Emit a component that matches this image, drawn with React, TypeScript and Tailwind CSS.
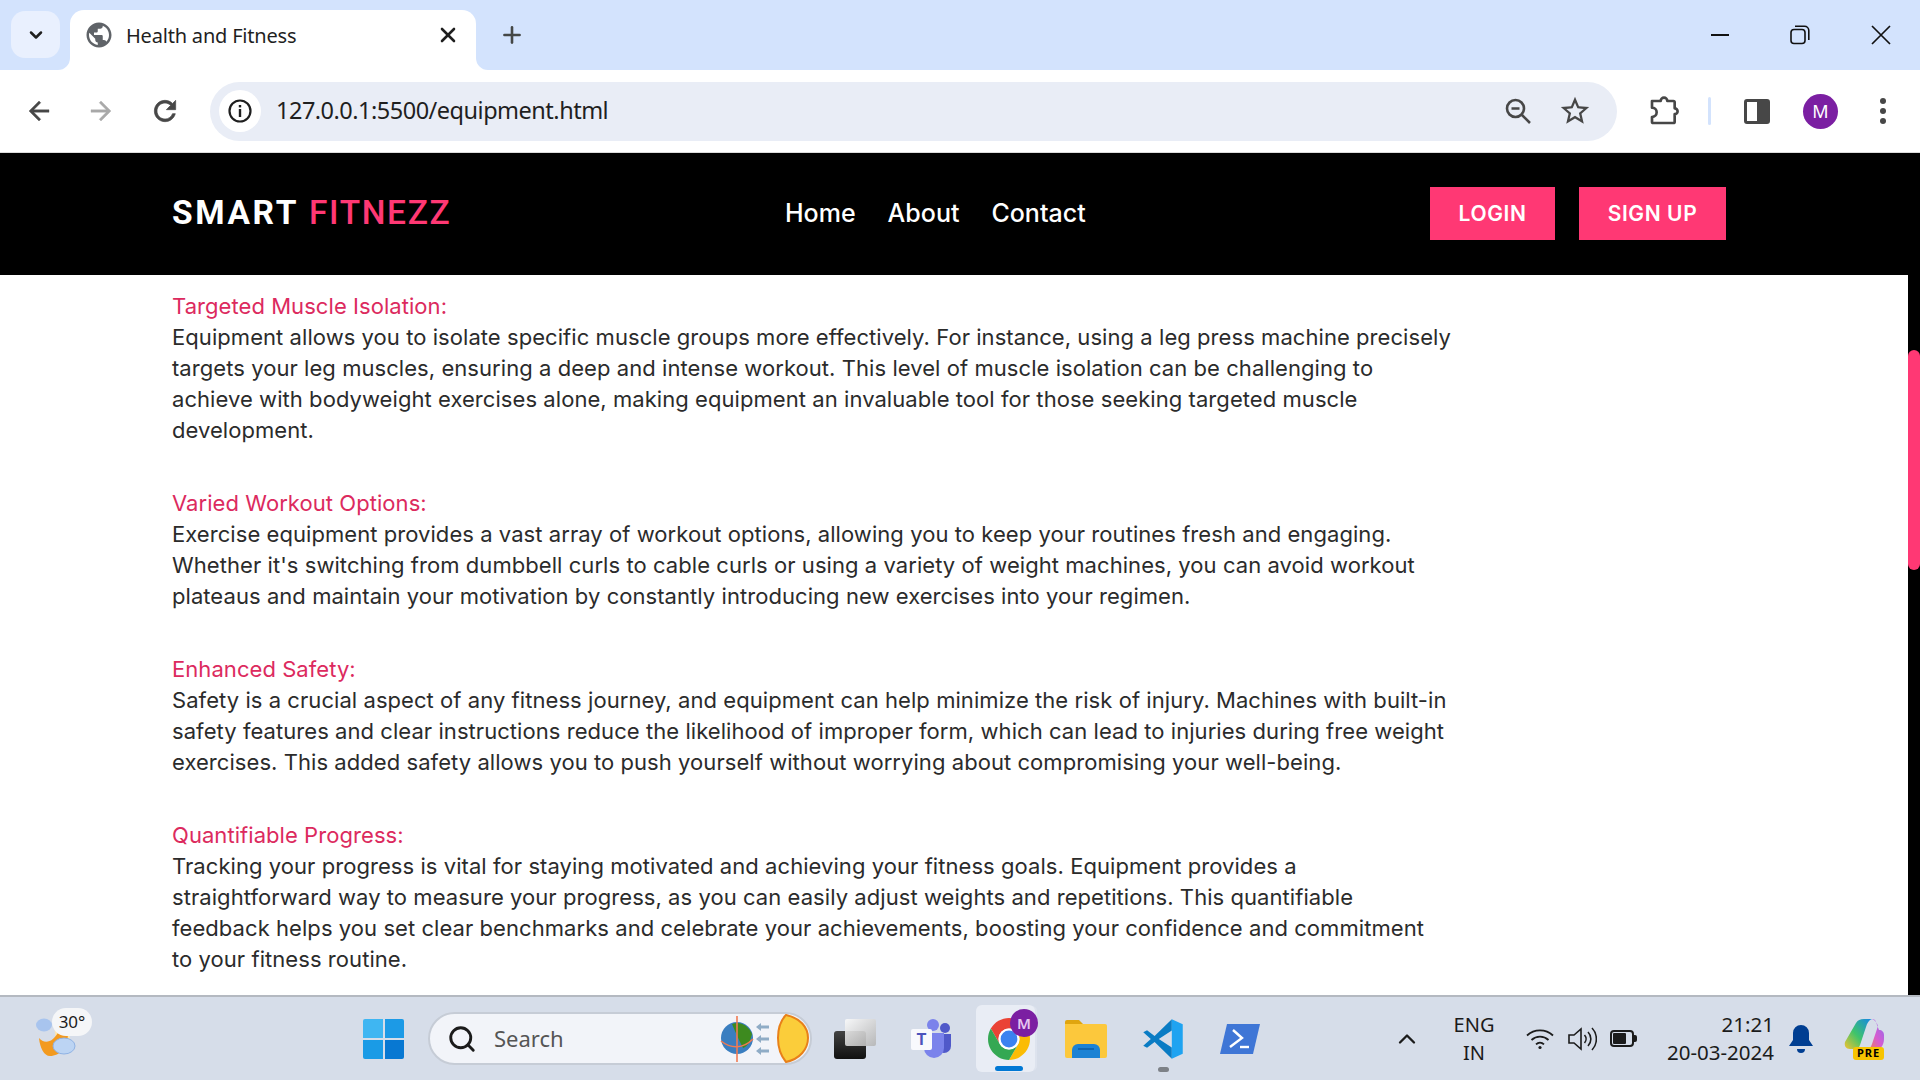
import React from "react";
import { X, Plus, ChevronDown, ChevronUp, Search } from "lucide-react";

const ui = "font-['Noto_Sans','Open_Sans',sans-serif]";

const P = ({ d, size, color, className = "", stroke = 0 }: { d: string; size: number; color: string; className?: string; stroke?: number }) => (
  <svg width={size} height={size} viewBox="0 0 24 24" fill={color} stroke={color} strokeWidth={stroke} className={"shrink-0 " + className}>
    <path d={d} />
  </svg>
);

const sections = [
  {
    h: "Targeted Muscle Isolation:",
    l: [
      "Equipment allows you to isolate specific muscle groups more effectively. For instance, using a leg press machine precisely",
      "targets your leg muscles, ensuring a deep and intense workout. This level of muscle isolation can be challenging to",
      "achieve with bodyweight exercises alone, making equipment an invaluable tool for those seeking targeted muscle",
      "development.",
    ],
  },
  {
    h: "Varied Workout Options:",
    l: [
      "Exercise equipment provides a vast array of workout options, allowing you to keep your routines fresh and engaging.",
      "Whether it's switching from dumbbell curls to cable curls or using a variety of weight machines, you can avoid workout",
      "plateaus and maintain your motivation by constantly introducing new exercises into your regimen.",
    ],
  },
  {
    h: "Enhanced Safety:",
    l: [
      "Safety is a crucial aspect of any fitness journey, and equipment can help minimize the risk of injury. Machines with built-in",
      "safety features and clear instructions reduce the likelihood of improper form, which can lead to injuries during free weight",
      "exercises. This added safety allows you to push yourself without worrying about compromising your well-being.",
    ],
  },
  {
    h: "Quantifiable Progress:",
    l: [
      "Tracking your progress is vital for staying motivated and achieving your fitness goals. Equipment provides a",
      "straightforward way to measure your progress, as you can easily adjust weights and repetitions. This quantifiable",
      "feedback helps you set clear benchmarks and celebrate your achievements, boosting your confidence and commitment",
      "to your fitness routine.",
    ],
  },
];

function TabStrip() {
  return (
    <div className="flex h-[70px] shrink-0 bg-[#d3e3fd]">
      <div className="ml-[11px] mt-[11px] flex h-[47px] w-[49px] items-center justify-center rounded-[14px] bg-[#e9f0fe]">
        <ChevronDown size={20} strokeWidth={3} color="#1f1f1f" />
      </div>
      <div className="relative ml-[10px] mt-[10px] flex h-[60px] w-[406px] items-center rounded-t-[14px] bg-white pb-[10px]">
        <svg width="12" height="12" viewBox="0 0 12 12" className="absolute bottom-0 left-[-12px]"><path d="M0 12A12 12 0 0 0 12 0V12Z" fill="#fff" /></svg>
        <svg width="12" height="12" viewBox="0 0 12 12" className="absolute bottom-0 right-[-12px]"><path d="M12 12A12 12 0 0 1 0 0V12Z" fill="#fff" /></svg>
        <P className="ml-[14px]" size={30} color="#5f6368" d="M12 2C6.48 2 2 6.48 2 12s4.48 10 10 10 10-4.48 10-10S17.52 2 12 2zm-1 17.93c-3.95-.49-7-3.85-7-7.93 0-.62.08-1.21.21-1.79L9 15v1c0 1.1.9 2 2 2v1.93zm6.9-2.54c-.26-.81-1-1.39-1.9-1.39h-1v-3c0-.55-.45-1-1-1H8v-2h2c.55 0 1-.45 1-1V7h2c1.1 0 2-.9 2-2v-.41c2.93 1.19 5 4.06 5 7.41 0 2.08-.8 3.97-2.1 5.39z" />
        <span className={ui + " ml-[12px] translate-y-[1px] text-[20px] tracking-[-0.2px] text-[#1f1f1f]"}>Health and Fitness</span>
        <X className="ml-auto mr-[16px]" size={24} strokeWidth={2.6} color="#1f1f1f" />
      </div>
      <div className="ml-[23px] flex items-center">
        <Plus size={26} strokeWidth={2.4} color="#444746" />
      </div>
      <div className="ml-auto flex items-center">
        <div className="h-[2px] w-[18px] bg-[#111]" />
        <svg className="ml-[61px]" width="20" height="20" viewBox="0 0 20 20" fill="none" stroke="#111" strokeWidth="1.6">
          <rect x="1" y="4.5" width="14" height="14" rx="3" />
          <path d="M5 1.2h9.5a4.3 4.3 0 0 1 4.3 4.3V15" />
        </svg>
        <svg className="ml-[61px] mr-[29px]" width="20" height="20" viewBox="0 0 20 20" stroke="#111" strokeWidth="1.7">
          <path d="M1 1l18 18M19 1L1 19" />
        </svg>
      </div>
    </div>
  );
}

function Toolbar() {
  return (
    <div className="flex h-[82px] shrink-0 items-center rounded-t-[12px] bg-white">
      <P className="ml-[24px]" size={30} stroke={0.3} color="#474747" d="M20 11H7.83l5.59-5.59L12 4l-8 8 8 8 1.41-1.41L7.83 13H20v-2z" />
      <P className="ml-[32px]" size={30} stroke={0.3} color="#a9a9a9" d="M4 11h12.17l-5.59-5.59L12 4l8 8-8 8-1.41-1.41L16.17 13H4v-2z" />
      <P className="ml-[33px]" size={32} stroke={0.5} color="#474747" d="M17.65 6.35C16.2 4.9 14.21 4 12 4c-4.42 0-7.99 3.58-7.99 8s3.57 8 7.99 8c3.73 0 6.84-2.55 7.73-6h-2.08c-.82 2.33-3.04 4-5.65 4-3.31 0-6-2.69-6-6s2.69-6 6-6c1.66 0 3.14.69 4.22 1.78L13 11h7V4l-2.35 2.35z" />
      <div className="ml-[29px] flex h-[59px] w-[1407px] items-center rounded-full bg-[#e9edf6]">
        <div className="ml-[9px] flex h-[42px] w-[42px] items-center justify-center rounded-full bg-white">
          <svg width="26" height="26" viewBox="0 0 26 26" fill="none">
            <circle cx="13" cy="13" r="10.5" stroke="#1f1f1f" strokeWidth="2.2" />
            <rect x="11.8" y="11" width="2.4" height="8" fill="#1f1f1f" />
            <rect x="11.8" y="7" width="2.4" height="2.4" fill="#1f1f1f" />
          </svg>
        </div>
        <span className={ui + " ml-[15px] text-[23.5px] tracking-[-0.5px] text-[#1f1f1f]"}>127.0.0.1:5500/equipment.html</span>
        <svg className="ml-auto" width="26" height="26" viewBox="0 0 26 26" fill="none" stroke="#474747" strokeWidth="2.6">
          <circle cx="10.5" cy="10.5" r="8.5" />
          <path d="M6.5 10.5h8M17 17l8 8" />
        </svg>
        <P className="ml-[27px] mr-[25px]" size={34} color="#474747" d="M22 9.24l-7.19-.62L12 2 9.19 8.63 2 9.24l5.46 4.73L5.82 21 12 17.27 18.18 21l-1.63-7.03L22 9.24zM12 15.4l-3.76 2.27 1-4.28-3.32-2.88 4.38-.38L12 6.1l1.71 4.04 4.38.38-3.32 2.88 1 4.28L12 15.4z" />
      </div>
      <svg className="ml-[31px]" width="32" height="32" viewBox="0 0 24 24" fill="none" stroke="#474747" strokeWidth="2" strokeLinejoin="round">
        <path d="M3 4.5H9.5a2.5 2.5 0 0 1 5 0H19a1 1 0 0 1 1 1V10a2.2 2.2 0 0 1 0 4.4V20a1 1 0 0 1-1 1H4a1 1 0 0 1-1-1V16.5a3.5 3.5 0 0 0 0-7Z" />
      </svg>
      <div className="ml-[28px] h-[28px] w-[3px] rounded-full bg-[#d3e3fd]" />
      <div className="ml-[33px] flex h-[25px] w-[26px] rounded-[3px] border-[3px] border-[#474747]">
        <div className="ml-auto h-full w-[10px] bg-[#474747]" />
      </div>
      <div className={ui + " ml-[33px] flex h-[35px] w-[35px] items-center justify-center rounded-full bg-[#7b1fa2] text-[18px] text-white"}>M</div>
      <div className="ml-[42px] flex flex-col gap-[4px]">
        <div className="h-[6px] w-[6px] rounded-full bg-[#474747]" />
        <div className="h-[6px] w-[6px] rounded-full bg-[#474747]" />
        <div className="h-[6px] w-[6px] rounded-full bg-[#474747]" />
      </div>
    </div>
  );
}

function Nav() {
  const f = "font-['Inter',sans-serif]";
  return (
    <div className="flex h-[123px] shrink-0 items-center border-t border-[#dcdcdc] bg-black pb-[1px] pl-[172px]">
      <div className="w-[613px] whitespace-nowrap font-['Roboto',sans-serif] text-[33.5px] font-bold tracking-[2.6px] text-white">
        SMART <span className="font-medium tracking-[1.6px] text-[#ff3874]">FITNEZZ</span>
      </div>
      <div className={f + " flex gap-[32px] text-[25px] font-medium tracking-[0px] text-white"}>
        <span>Home</span>
        <span>About</span>
        <span>Contact</span>
      </div>
      <div className={f + " ml-auto mr-[194px] flex gap-[24px] text-[21px] font-semibold tracking-[0.6px] text-white"}>
        <div className="flex h-[53px] w-[125px] items-center justify-center bg-[#ff3874]">LOGIN</div>
        <div className="flex h-[53px] w-[147px] items-center justify-center bg-[#ff3874]">SIGN UP</div>
      </div>
    </div>
  );
}

function Content() {
  return (
    <div className="flex min-h-0 flex-1 bg-white">
      <div className="min-h-0 flex-1 overflow-hidden pl-[172px] pt-[16px] font-['Inter',sans-serif] text-[22px] leading-[31px] tracking-[0.06px] text-[#2b2b2b]">
        {sections.map((s) => (
          <div key={s.h} className="mb-[42px] whitespace-nowrap">
            <div className="text-[#dc2a5e]">{s.h}</div>
            {s.l.map((t) => (
              <div key={t}>{t}</div>
            ))}
          </div>
        ))}
      </div>
      <div className="w-[12px] shrink-0 bg-black pt-[75px]">
        <div className="h-[220px] rounded-full bg-[#ff3874]" />
      </div>
    </div>
  );
}

function Taskbar() {
  const t = ui + " text-[#1b1b1b]";
  return (
    <div className="flex h-[85px] shrink-0 items-center border-t-2 border-[#b4b9c1] bg-[#d6dde9]">
      {/* weather */}
      <div className="relative ml-[36px] h-[52px] w-[56px]">
        <svg width="42" height="40" viewBox="0 0 42 40" className="absolute left-0 top-[4px]">
          <ellipse cx="8" cy="8" rx="8" ry="6.5" fill="#a8c4ee" />
          <path d="M18 8h16v16H20z" fill="#ffe6ae" />
          <path d="M3 21C8 27 17 27 24 12L32 16C32 30 24 39 14 39C8 39 4 31 3 21Z" fill="#f39a1f" />
          <ellipse cx="28" cy="29" rx="11" ry="8" fill="#bcd4f3" stroke="#8fb2e4" strokeWidth="1" />
        </svg>
        <div className={t + " absolute left-[16px] top-[-5px] flex h-[28px] w-[40px] items-center justify-center rounded-full bg-[#f5f6f8] text-[17px]"}>30°</div>
      </div>
      {/* windows */}
      <div className="ml-[271px] grid h-[40px] w-[41px] grid-cols-2 gap-[2px]">
        <div className="rounded-tl-[2px] bg-[#3fb6f2]" />
        <div className="rounded-tr-[2px] bg-[#1c9ae6]" />
        <div className="rounded-bl-[2px] bg-[#1a9be6]" />
        <div className="rounded-br-[2px] bg-[#0878d2]" />
      </div>
      {/* search */}
      <div className="ml-[24px] flex h-[53px] w-[384px] items-center rounded-full border-2 border-[#c6ccd6] bg-[#f2f4f9]">
        <Search className="ml-[17px]" size={30} strokeWidth={2.3} color="#1b1b1b" />
        <span className={ui + " ml-[17px] text-[22px] text-[#555]"}>Search</span>
        <svg className="ml-auto" width="90" height="50" viewBox="0 0 90 50">
          <circle cx="17" cy="24" r="16" fill="#3a7ec0" />
          <path d="M12 10c8-3 16 1 20 10-2 8-4 12-9 14-3-6-6-12-11-24z" fill="#3d8a1f" />
          <path d="M17 2v46" stroke="#f07a52" strokeWidth="1.6" />
          <path d="M1 27c10 8 22 8 32 -2" stroke="#f07a52" strokeWidth="1.6" fill="none" />
          <path d="M36 13l5-4v2.5h8v3h-8V17zM36 25l5-4v2.5h8v3h-8V29zM36 37l5-4v2.5h8v3h-8V41z" fill="#8facc6" />
          <path d="M66 1c14 3 22 12 22 23s-8 21-22 24c-5-6-8-14-8-24s3-18 8-23z" fill="#fbcd3a" stroke="#e8801a" strokeWidth="2" />
        </svg>
      </div>
      {/* task view */}
      <div className="relative ml-[22px] h-[40px] w-[42px]">
        <div className="absolute bottom-0 left-0 h-[28px] w-[32px] rounded-[3px] bg-gradient-to-b from-[#444] to-[#111]" />
        <div className="absolute right-0 top-0 h-[27px] w-[31px] rounded-[2px] bg-gradient-to-br from-[#fbfbfb] to-[#b4b4b4] opacity-90" />
      </div>
      {/* teams */}
      <svg className="ml-[35px]" width="42" height="40" viewBox="0 0 42 40">
        <circle cx="34" cy="9" r="5" fill="#5059c9" />
        <path d="M26 15h14v12a7 7 0 0 1-14 0z" fill="#5059c9" />
        <circle cx="22" cy="6" r="6" fill="#7b83eb" />
        <path d="M13 14h20v15a10 10 0 0 1-20 0z" fill="#7b83eb" />
        <rect x="0" y="10" width="21" height="21" rx="2" fill="#f8f9fd" />
        <text x="10.5" y="26" textAnchor="middle" fontSize="16" fontWeight="700" fontFamily="Roboto" fill="#4b53bc">T</text>
      </svg>
      {/* chrome */}
      <div className="relative ml-[23px] h-[67px] w-[59px] rounded-[6px] bg-[#e9edf5] shadow-[3px_0_0_-1px_#dde3ee]">
        <svg className="absolute left-[12px] top-[13px]" width="42" height="42" viewBox="4 4 40 40">
          <path d="M41.32 14A20 20 0 0 0 6.68 14L15.34 29A10 10 0 0 1 24 14Z" fill="#ea4335" />
          <path d="M41.32 14H24A10 10 0 0 1 32.66 29L24 44A20 20 0 0 0 41.32 14Z" fill="#fbbc04" />
          <path d="M6.68 14A20 20 0 0 0 24 44L32.66 29A10 10 0 0 1 15.34 29Z" fill="#34a853" />
          <circle cx="24" cy="24" r="10" fill="#fff" />
          <circle cx="24" cy="24" r="8" fill="#3b82f0" />
        </svg>
        <div className={ui + " absolute left-[34px] top-[4px] flex h-[28px] w-[28px] items-center justify-center rounded-full bg-[#7b1fa2] text-[15px] font-semibold text-[#e6c6f0]"}>M</div>
        <div className="absolute bottom-[1px] left-[19px] h-[5px] w-[28px] rounded-full bg-[#0078d4]" />
      </div>
      {/* folder */}
      <svg className="ml-[30px]" width="42" height="38" viewBox="0 0 42 38">
        <path d="M0 2a2 2 0 0 1 2-2h12l4 4h-18z" fill="#e0a50f" />
        <path d="M0 4h40a2 2 0 0 1 2 2v30a2 2 0 0 1-2 2H2a2 2 0 0 1-2-2z" fill="#fcc83c" />
        <path d="M7 38V30a6 6 0 0 1 6-6h16a6 6 0 0 1 6 6v8z" fill="#1c82d4" />
        <path d="M13 29h16" stroke="#0d5fa8" strokeWidth="1.6" />
      </svg>
      {/* vscode */}
      <div className="relative ml-[35px] h-[42px] w-[42px]">
        <svg width="42" height="42" viewBox="0 0 100 100">
          <path d="M71 3L30 43L12 29L3 34L21 50L3 66L12 71L30 57L71 97V70L40 50L71 30Z" fill="#0a7cc4" />
          <path d="M71 3L97 15V85L71 97Z" fill="#1fa3f1" />
        </svg>
        <div className="absolute bottom-[-12px] left-[16px] h-[5px] w-[11px] rounded-full bg-[#7d8187]" />
      </div>
      {/* powershell */}
      <svg className="ml-[36px]" width="40" height="30" viewBox="0 0 40 30">
        <path d="M7 0H40L33 30H0Z" fill="#3f76d6" />
        <path d="M13 6l9 8-12 9" fill="none" stroke="#fff" strokeWidth="2.4" />
        <path d="M20 23h9" stroke="#fff" strokeWidth="2.4" />
      </svg>
      <ChevronUp className="ml-[133px]" size={28} strokeWidth={2} color="#1b1b1b" />
      <div className={t + " ml-[33px] flex w-[40px] flex-col items-center text-[20px] leading-[28px]"}>
        <span>ENG</span>
        <span>IN</span>
      </div>
      {/* wifi */}
      <svg className="ml-[32px]" width="28" height="22" viewBox="0 0 28 22" fill="none" stroke="#1b1b1b" strokeWidth="1.8">
        <path d="M1 7.5a19 19 0 0 1 26 0M5.5 12a12.5 12.5 0 0 1 17 0M10 16.3a6 6 0 0 1 8 0" />
        <circle cx="14" cy="19.5" r="1.6" fill="#1b1b1b" stroke="none" />
      </svg>
      {/* speaker */}
      <svg className="ml-[14px]" width="29" height="26" viewBox="0 0 29 26" fill="none" stroke="#1b1b1b" strokeWidth="1.6">
        <path d="M1 9h5l7-6v20l-7-6H1z" />
        <path d="M16.5 9a6 6 0 0 1 0 8M20 6a10 10 0 0 1 0 14M24 2a16 16 0 0 1 0 22" />
      </svg>
      {/* battery */}
      <div className="ml-[13px] flex items-center">
        <div className="flex h-[17px] w-[24px] items-center rounded-[4px] border-2 border-[#1b1b1b] p-[1px]">
          <div className="h-full w-[13px] rounded-[1px] bg-[#1b1b1b]" />
        </div>
        <div className="h-[7px] w-[3px] rounded-r-[2px] bg-[#1b1b1b]" />
      </div>
      <div className={t + " w-[137px] text-right text-[20.5px] leading-[28px]"}>
        <div className="-mt-[2px]">21:21</div>
        <div>20-03-2024</div>
      </div>
      {/* bell */}
      <svg className="ml-[15px]" width="24" height="28" viewBox="0 0 24 28">
        <path d="M12 0a8 8 0 0 1 8 8v7l4 6H0l4-6V8a8 8 0 0 1 8-8z" fill="#003e92" />
        <path d="M8 24h8a4 4 0 0 1-8 0z" fill="#003e92" />
      </svg>
      {/* copilot */}
      <div className="relative ml-[31px] h-[40px] w-[40px]">
        <svg width="40" height="34" viewBox="0 0 40 34">
          <defs>
            <linearGradient id="cpa" x1="0" y1="1" x2="1" y2="0">
              <stop offset="0" stopColor="#f2c230" />
              <stop offset="0.45" stopColor="#3fc46a" />
              <stop offset="1" stopColor="#1486e8" />
            </linearGradient>
            <linearGradient id="cpb" x1="0" y1="1" x2="1" y2="0">
              <stop offset="0" stopColor="#f08a3c" />
              <stop offset="0.5" stopColor="#d85bd0" />
              <stop offset="1" stopColor="#8a6cf0" />
            </linearGradient>
          </defs>
          <path d="M12 4C14 1 16 0 20 0h8c-3 1-5 4-6 8l-6 18c-1 3-3 4-6 4H6c-4 0-6-3-5-7z" fill="url(#cpa)" />
          <path d="M28 0c3 0 4 2 5 6l2 5c3 0 5 2 5 5v4c0 6-4 12-10 12h-8c3-1 5-4 6-7l6-18c-1-3-3-6-6-7z" fill="url(#cpb)" />
        </svg>
        <div className={ui + " absolute bottom-[-1px] left-[9px] flex h-[13px] w-[31px] items-center justify-center rounded-[3px] bg-[#f7c400] text-[11px] font-bold tracking-[1px] text-black"}>PRE</div>
      </div>
    </div>
  );
}

export default function App() {
  return (
    <div className="flex h-[1080px] w-[1920px] flex-col overflow-hidden bg-white">
      <TabStrip />
      <Toolbar />
      <Nav />
      <Content />
      <Taskbar />
    </div>
  );
}
